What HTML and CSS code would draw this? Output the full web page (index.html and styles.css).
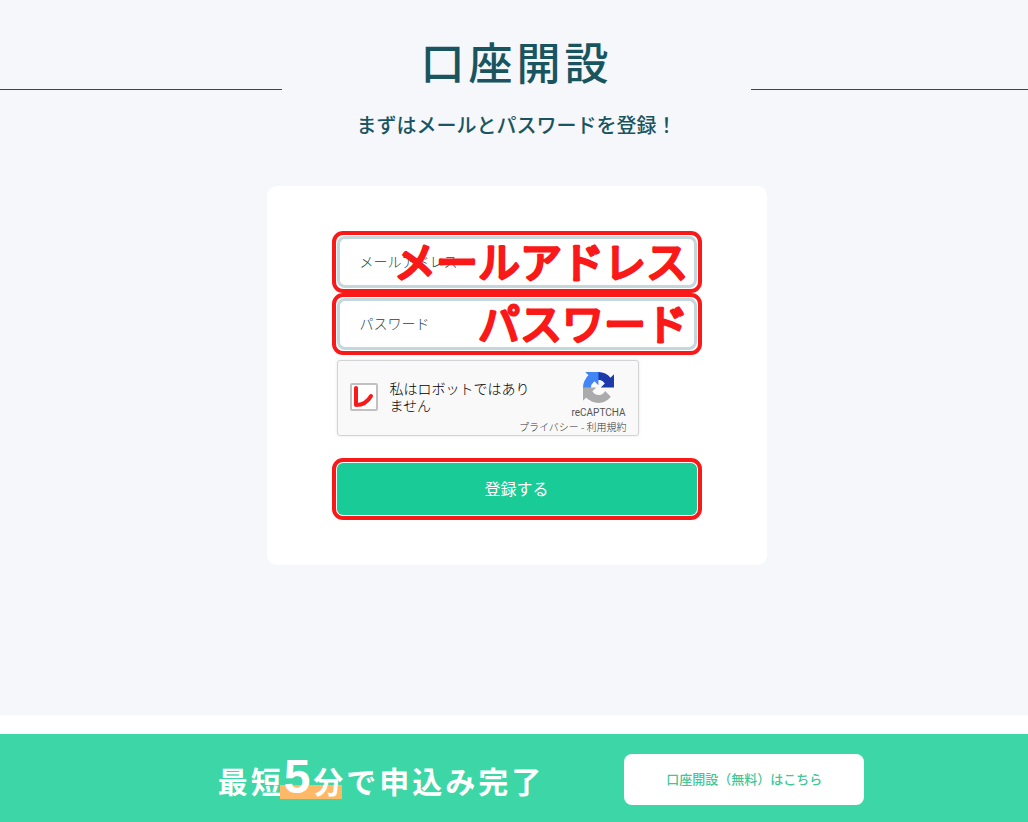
FILE: index.html
```html
<!DOCTYPE html>
<html lang="ja">
<head>
<meta charset="utf-8">
<meta name="viewport" content="width=device-width, initial-scale=1">
<title>口座開設</title>
<link rel="stylesheet" href="styles.css">
</head>
<body>
<main class="signup">
  <header class="heading">
    <h1 class="heading-title">口座開設</h1>
  </header>
  <p class="lead">まずはメールとパスワードを登録！</p>
  <form class="card">
    <div class="field marked">
      <input class="field-input" type="email" placeholder="メールアドレス" aria-label="メールアドレス">
      <svg class="note" width="310" height="72"><text class="note-text" x="304" y="52">メールアドレス</text></svg>
    </div>
    <div class="field marked">
      <input class="field-input" type="password" placeholder="パスワード" aria-label="パスワード">
      <svg class="note" width="310" height="72"><text class="note-text" x="304" y="52">パスワード</text></svg>
    </div>
    <div class="captcha">
      <div class="captcha-check">
        <input class="captcha-box" type="checkbox" id="robot">
        <svg class="captcha-tick" viewBox="0 0 28 28" aria-hidden="true"><path d="M6 5V22Q16 22 21 13"/></svg>
      </div>
      <label class="captcha-label" for="robot">私はロボットではありません</label>
      <div class="captcha-brand">
        <svg class="captcha-logo" viewBox="0 0 64 64" aria-hidden="true">
          <path fill="#1c3aa9" d="M64 31.955l-.033-1.37V4.687l-7.16 7.16C50.948 4.674 42.033.093 32.05.093c-10.4 0-19.622 4.96-25.458 12.64l11.736 11.86a15.55 15.55 0 0 1 4.754-5.334c2.05-1.6 4.952-2.906 8.968-2.906.485 0 .86.057 1.135.163 4.976.393 9.288 3.14 11.828 7.124l-8.307 8.307L64 31.953"/>
          <path fill="#4285f4" d="M31.862.094l-1.37.033H4.594l7.16 7.16C4.58 13.147 0 22.06 0 32.046c0 10.4 4.96 19.622 12.64 25.458L24.5 45.768a15.55 15.55 0 0 1-5.334-4.754c-1.6-2.05-2.906-4.952-2.906-8.968 0-.485.057-.86.163-1.135.393-4.976 3.14-9.288 7.124-11.828l8.307 8.307L31.86.095"/>
          <path fill="#ababab" d="M.001 32.045l.033 1.37v25.898l7.16-7.16c5.86 7.173 14.774 11.754 24.76 11.754 10.4 0 19.622-4.96 25.458-12.64l-11.736-11.86a15.55 15.55 0 0 1-4.754 5.334c-2.05 1.6-4.952 2.906-8.968 2.906-.485 0-.86-.057-1.135-.163-4.976-.393-9.288-3.14-11.828-7.124l8.307-8.307c-10.522.04-22.4.066-27.295-.005"/>
        </svg>
        <span class="captcha-name">reCAPTCHA</span>
      </div>
      <div class="captcha-links"><a href="#">プライバシー</a> - <a href="#">利用規約</a></div>
    </div>
    <button class="submit marked" type="submit">登録する</button>
  </form>
</main>
<footer class="banner">
  <p class="banner-text">最短<span class="banner-mark"><span class="banner-number">5</span>分</span>で申込み完了</p>
  <a class="banner-link" href="#">口座開設（無料）はこちら</a>
</footer>
</body>
</html>
```
FILE: styles.css
```css
* {
  box-sizing: border-box;
}

body {
  margin: 0;
  background: #fff;
  color: #1a555f;
  font-family: "Noto Sans CJK JP", sans-serif;
}

.signup {
  display: flex;
  flex-direction: column;
  align-items: center;
  padding: 32px 0 150px 5px;
  background: #f5f7fb;
}

.heading {
  display: flex;
  align-items: flex-end;
  align-self: stretch;
  margin-left: -5px;
}

.heading::before,
.heading::after {
  content: "";
  flex: 1;
  height: 1px;
  background: #1a555f;
}

.heading::before {
  padding-left: 5px;
}

.heading-title {
  width: 469px;
  margin: 0;
  font-size: 44px;
  font-weight: 500;
  line-height: 58px;
  letter-spacing: 4px;
  text-align: center;
}

.lead {
  margin: 20px 0 46px;
  font-size: 20px;
  font-weight: 500;
  line-height: 30px;
}

.card {
  display: flex;
  flex-direction: column;
  gap: 10px;
  width: 500px;
  max-width: 100%;
  padding: 50px 70px;
  border-radius: 10px;
  background: #fff;
}

.marked {
  border-radius: 6px;
  outline: 4px solid #fa1919;
  outline-offset: 1px;
}

.field {
  position: relative;
}

.field-input {
  display: block;
  width: 100%;
  height: 52px;
  padding: 0 20px 2px;
  border: 3px solid #c4d7db;
  border-radius: 8px;
  background: #fff;
  color: #1a555f;
  font: 300 14px "Noto Sans CJK JP", sans-serif;
}

.field-input::placeholder {
  color: #0d4752;
  opacity: 1;
}

.note {
  position: absolute;
  top: -10px;
  right: 3px;
  overflow: visible;
  pointer-events: none;
}

.note-text {
  fill: #fa1919;
  stroke: #fa1919;
  stroke-width: 3px;
  stroke-linejoin: round;
  font-size: 42px;
  font-weight: 400;
  text-anchor: end;
}

.captcha {
  display: grid;
  grid-template-columns: 28px 1fr 54px;
  column-gap: 12px;
  width: 302px;
  max-width: 100%;
  height: 76px;
  margin-bottom: 17px;
  padding: 0 12px;
  border: 1px solid #d3d3d3;
  border-radius: 3px;
  background: #f9f9f9;
  box-shadow: 0 0 3px rgba(0, 0, 0, 0.1);
}

.captcha-check {
  position: relative;
  width: 28px;
  height: 28px;
  margin-top: 22px;
}

.captcha-box {
  display: block;
  width: 28px;
  height: 28px;
  margin: 0;
  border: 2px solid #c1c1c1;
  border-radius: 2px;
  background: #fff;
  appearance: none;
}

.captcha-tick {
  position: absolute;
  inset: 0;
  fill: none;
  stroke: #fa1919;
  stroke-width: 4;
  stroke-linecap: round;
  stroke-linejoin: round;
  pointer-events: none;
}

.captcha-label {
  width: 144px;
  margin-top: 19px;
  color: #000;
  font-size: 14px;
  font-weight: 300;
  line-height: 17px;
}

.captcha-brand {
  display: flex;
  flex-direction: column;
  align-items: center;
  padding-top: 11px;
}

.captcha-logo {
  width: 31px;
  height: 31px;
}

.captcha-name {
  margin-top: 4px;
  color: #555;
  font: 10px/12px Roboto, sans-serif;
}

.captcha-links {
  grid-column: 1 / -1;
  margin-right: -1px;
  color: #333;
  font-size: 10px;
  font-weight: 300;
  line-height: 14px;
  text-align: right;
}

.captcha-links a {
  color: inherit;
  text-decoration: none;
}

.submit {
  height: 52px;
  padding: 0 0 3px;
  border: 0;
  background: #19cb96;
  color: #fff;
  font: 400 16px "Noto Sans CJK JP", sans-serif;
}

.banner {
  display: flex;
  flex-wrap: wrap;
  align-items: center;
  justify-content: center;
  gap: 20px 80px;
  min-height: 88px;
  margin-top: 19px;
  padding: 18px 0 16px 54px;
  background: #3dd6a6;
}

.banner-text {
  margin: 0;
  padding-bottom: 2px;
  color: #fff;
  font-size: 30px;
  font-weight: 700;
  line-height: 48px;
  letter-spacing: 3px;
}

.banner-mark {
  margin-left: -4px;
  padding-left: 4px;
  background: linear-gradient(#ffb866, #ffb866) left 0 bottom 3px / calc(100% - 4px) 14px no-repeat;
}

.banner-number {
  font-family: "Liberation Sans", sans-serif;
  font-size: 48px;
  line-height: 48px;
}

.banner-link {
  display: flex;
  align-items: center;
  justify-content: center;
  width: 240px;
  height: 51px;
  padding-bottom: 2px;
  border-radius: 8px;
  background: #fff;
  color: #3fc798;
  font-size: 13px;
  font-weight: 500;
  text-decoration: none;
}
```
